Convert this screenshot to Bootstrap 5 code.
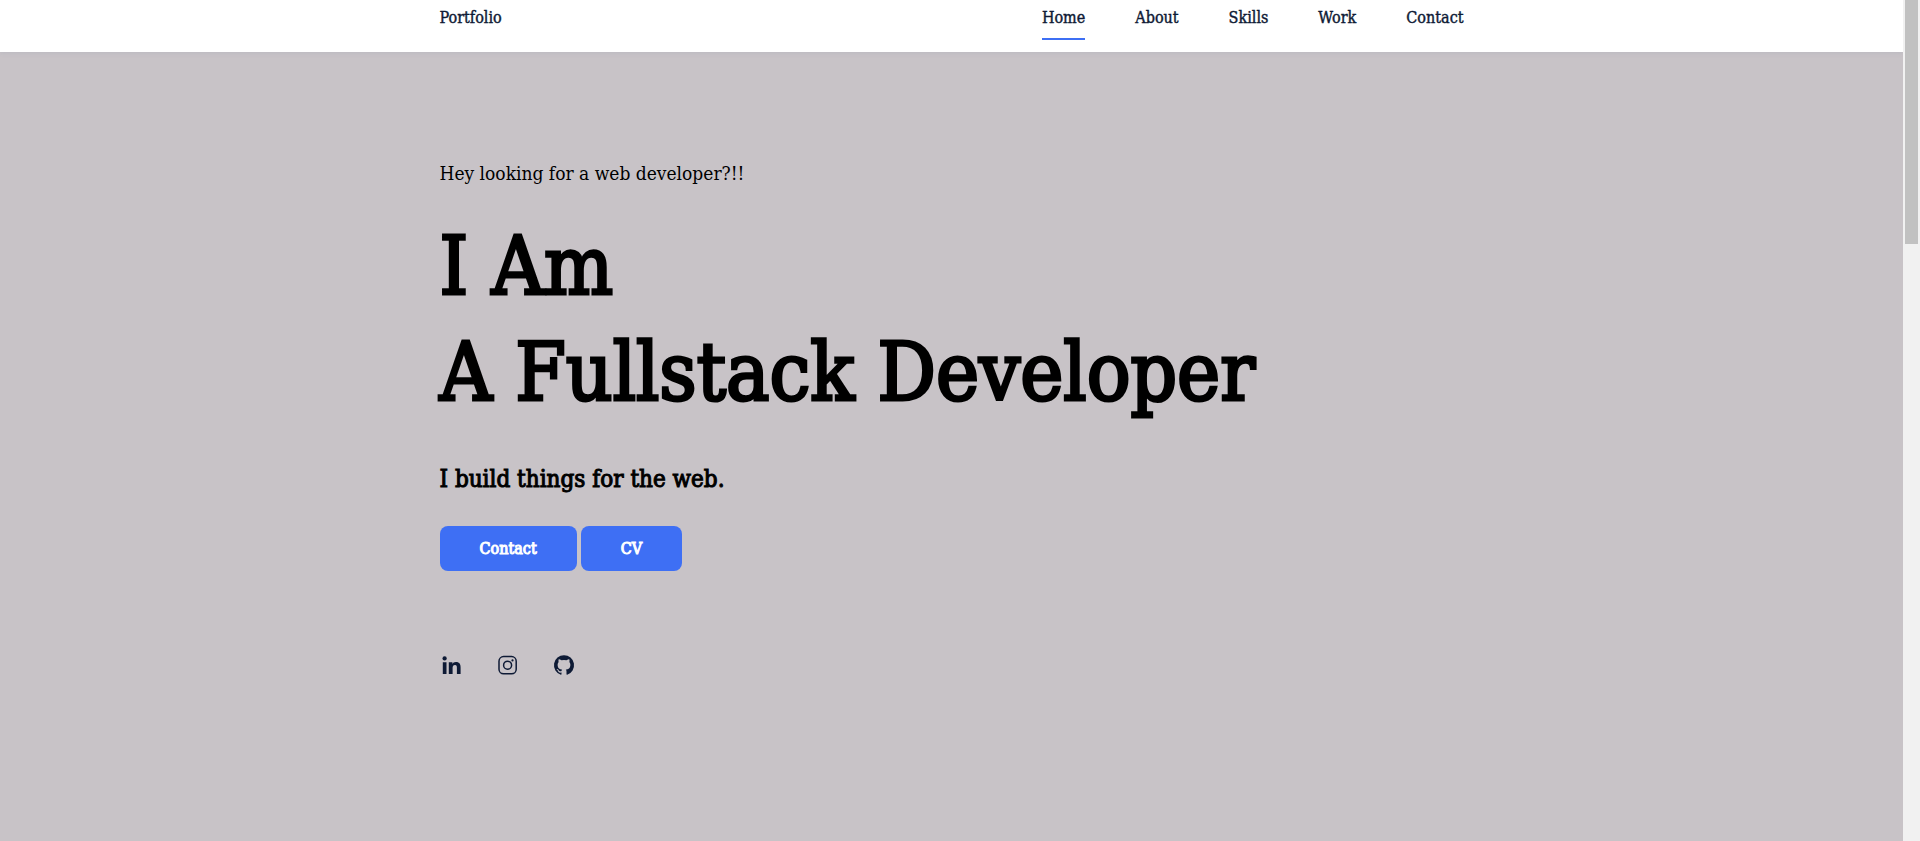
<!DOCTYPE html>
<html lang="en">
<head>
<meta charset="utf-8">
<meta name="viewport" content="width=device-width, initial-scale=1">
<title>Portfolio</title>
<link href="https://cdn.jsdelivr.net/npm/bootstrap@5.3.0/dist/css/bootstrap.min.css" rel="stylesheet">
<style>
  :root { --ink: #0e1a35; --accent: #3e6ff4; --backdrop: #c8c3c7; }
  body {
    font-family: "Roboto Slab", "DejaVu Serif Condensed", "DejaVu Serif", serif;
    font-stretch: condensed;
    color: #000;
    background: var(--backdrop);
  }
  .wrap { max-width: 1024px; }
  .site-header { background: #fff; height: 52px; padding-top: 6px; box-shadow: 0 1px 4px rgba(146, 161, 176, .25); }
  .site-header a { color: var(--ink); font-size: 16px; line-height: 24px; -webkit-text-stroke: 0.4px currentColor; }
  .menu { gap: 50px; }
  .menu a.active { border-bottom: 2px solid var(--accent); padding-bottom: 8px; }
  .hero { padding-top: 107px; }
  .intro { font-size: 19px; line-height: 28px; margin-bottom: 26px; }
  .headline { font-size: 81px; line-height: 106px; font-weight: 400; -webkit-text-stroke: 3px currentColor; margin-bottom: 38px; }
  .tagline { font-size: 24px; line-height: 32px; font-weight: 400; -webkit-text-stroke: 1px currentColor; margin-bottom: 31px; }
  .cta { background: var(--accent); color: #fff; font-size: 16px; line-height: 21px; padding: 12px 40px; border: 0; border-radius: 8px; -webkit-text-stroke: 1px currentColor; }
  .cta:hover { background: #315fe0; color: #fff; }
  .social { margin-top: 82px; gap: 32px; }
  .social a { color: var(--ink); }
  .scroll-track { width: 17px; background: #f1f1f1; padding: 0 2px; }
  .scroll-thumb { height: 29vh; background: #c1c1c1; }
</style>
</head>
<body class="d-flex min-vh-100">
<div class="flex-grow-1">
  <header class="site-header">
    <nav class="wrap mx-auto d-flex justify-content-between align-items-start" aria-label="Main">
      <a class="text-decoration-none" href="#home">Portfolio</a>
      <ul class="menu list-unstyled d-flex mb-0">
        <li><a class="active d-block text-decoration-none" href="#home" aria-current="page">Home</a></li>
        <li><a class="d-block text-decoration-none" href="#about">About</a></li>
        <li><a class="d-block text-decoration-none" href="#skills">Skills</a></li>
        <li><a class="d-block text-decoration-none" href="#work">Work</a></li>
        <li><a class="d-block text-decoration-none" href="#contact">Contact</a></li>
      </ul>
    </nav>
  </header>
  <main id="home" class="hero wrap mx-auto">
    <p class="intro">Hey looking for a web developer?!!</p>
    <h1 class="headline">I Am<br>A Fullstack Developer</h1>
    <h2 class="tagline">I build things for the web.</h2>
    <div class="d-flex gap-1">
      <button type="button" class="btn cta">Contact</button>
      <button type="button" class="btn cta">CV</button>
    </div>
    <div class="social d-flex">
      <a href="#linkedin" aria-label="LinkedIn"><svg class="d-block" width="24" height="24" viewBox="0 0 24 24" fill="currentColor"><circle cx="4.600" cy="5.400" r="2.150"/><path d="M2.800 9.300h3.700v11.700H2.800zM8.800 9.300h3.600v1.600c.5-.95 1.700-1.900 3.500-1.900 3.800 0 4.700 2.400 4.700 5.500v6.500h-3.700v-5.800c0-1.400 0-3.200-1.900-3.200-2 0-2.400 1.500-2.400 3.100v5.900H8.800z"/></svg></a>
      <a href="#instagram" aria-label="Instagram"><svg class="d-block" width="24" height="24" viewBox="0 0 24 24" fill="none" stroke="currentColor" stroke-width="1.500"><rect x="3" y="3.600" width="17.200" height="17.200" rx="4.600"/><circle cx="11.600" cy="12.200" r="4"/><circle cx="16.500" cy="7.400" r="1.100" fill="currentColor" stroke="none"/></svg></a>
      <a href="#github" aria-label="GitHub"><svg class="d-block" width="24" height="24" viewBox="0 0 24 24" fill="currentColor"><path d="M12 2.200A10 10 0 0 0 8.840 21.700c.5.080.660-.230.660-.500v-1.690c-2.770.600-3.360-1.340-3.360-1.340-.460-1.160-1.110-1.470-1.110-1.470-.910-.620.070-.600.070-.600 1 .070 1.530 1.030 1.530 1.030.870 1.520 2.340 1.070 2.910.830.090-.650.350-1.090.630-1.340-2.220-.250-4.550-1.110-4.550-4.920 0-1.110.380-2 1.030-2.710-.100-.250-.450-1.290.100-2.640 0 0 .840-.270 2.750 1.020a9.600 9.600 0 0 1 5 0c1.910-1.290 2.750-1.020 2.750-1.020.550 1.350.200 2.390.100 2.640.650.710 1.030 1.600 1.030 2.710 0 3.820-2.340 4.660-4.570 4.910.360.310.690.920.690 1.850v2.740c0 .270.160.590.670.500A10 10 0 0 0 12 2.200z"/></svg></a>
    </div>
  </main>
</div>
<div class="scroll-track flex-shrink-0" aria-hidden="true"><div class="scroll-thumb"></div></div>
<script src="https://cdn.jsdelivr.net/npm/bootstrap@5.3.0/dist/js/bootstrap.bundle.min.js"></script>
</body>
</html>
